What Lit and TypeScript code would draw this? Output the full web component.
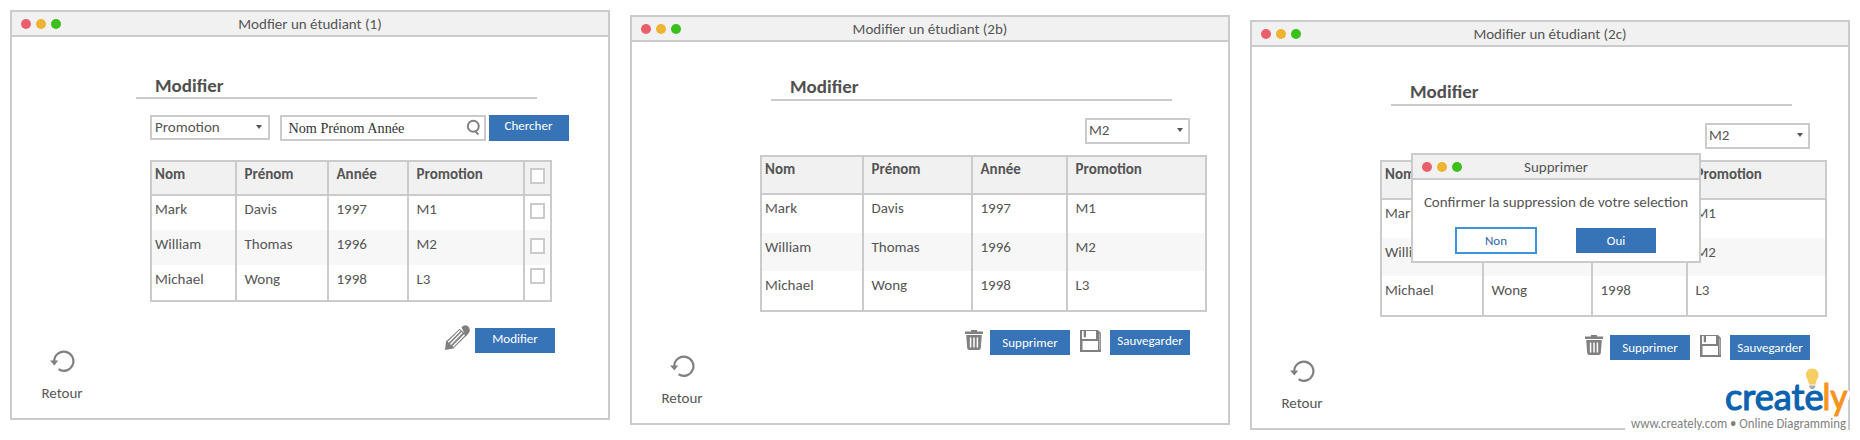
import { LitElement, html, css, nothing } from "lit";
import { customElement, property } from "lit/decorators.js";

const trash = html`<svg class="trash" width="18" height="20" viewBox="0 0 18 20">
  <path fill="#808080" d="M6 0h6v1.400h6v2.600H0V1.400h6z"/>
  <path fill="#808080" d="M1.200 5h15.600L15.800 18q-.2 2-2.200 2H4.400q-2 0-2.200-2z"/>
  <path stroke="#fff" stroke-width="1.500" d="M5.600 7.500v10M9 7.500v10M12.400 7.500v10"/>
</svg>`;

const floppy = html`<svg class="floppy" width="21" height="22" viewBox="0 0 21 22">
  <path fill="#808080" d="M0 0h18l3 3v19H0z"/>
  <path fill="#fff" d="M2 1h1.700v6.300H6V1h10v8H2zM2.500 11h15.500v9H2.500z"/>
  <path fill="#d0d0d0" d="M19.400 3.500h.9v16h-.9z"/>
</svg>`;

const pencil = html`<svg class="pencil" width="25" height="25" viewBox="0 0 25 25">
  <path fill="#808080" d="M16.500 2.200Q19.500-1.200 23 1.200q3.200 3 .8 6.800l-3 3.600z"/>
  <path fill="#808080" d="M14.600 3.800l7.200 6.400L8.300 23.400 0 25l1-8.600z"/>
  <path stroke="#fff" stroke-width="1.400" d="M15 5.400L3.300 17.200M17 7.600L5.500 19.400M19.500 9.800L7.900 21.500"/>
</svg>`;

const back = html`<svg class="back" width="25" height="22" viewBox="0 0 25 22">
  <path fill="none" stroke="#808080" stroke-width="2.200" d="M4.200 13V10.800A9.600 9.600 0 1 1 8.600 19.300"/>
  <path fill="#808080" d="M0 10.600h8.200L4.400 15.400z"/>
</svg>`;

const base = css`
  :host { display: block; box-sizing: border-box; }
  * { box-sizing: border-box; }
  svg { display: block; flex: none; }
`;

@customElement("frame-window")
class FrameWindow extends LitElement {
  @property() heading = "";
  static styles = [base, css`
    :host { border: 2px solid #cbcbcb; background: #fff; }
    .bar { height: 25px; background: #f1f1f1; border-bottom: 2px solid #cbcbcb; display: grid;
      grid-template-columns: 60px 1fr 60px; align-items: center; }
    .dots { display: flex; gap: 5px; padding-left: 9px; }
    .dot { width: 10px; height: 10px; flex: none; border-radius: 50%; }
    .red { background: #ea5f6c; } .amber { background: #edb431; } .green { background: #3bc01b; }
    .title { text-align: center; line-height: 24px; height: 23px; white-space: nowrap; }
  `];
  render() {
    return html`<div class="bar">
      <div class="dots"><i class="dot red"></i><i class="dot amber"></i><i class="dot green"></i></div>
      <div class="title">${this.heading}</div>
    </div><slot></slot>`;
  }
}

@customElement("student-table")
class StudentTable extends LitElement {
  @property({ type: Boolean, reflect: true }) selectable = false;
  static styles = [base, css`
    :host { border: 2px solid #cbcbcb; }
    .row { display: grid; grid-template-columns: 100px 109px 95px 1fr; height: 38px; }
    .cell { border-left: 2px solid #cbcbcb; padding: 4px 0 0 7.500px; line-height: 20px; }
    .cell:first-child { border-left: 0; padding-left: 3px; }
    .head { font-weight: 700; background: #f1f1f1; border-bottom: 2px solid #cbcbcb; }
    .head .cell { padding-top: 2px; }
    .first .cell { padding-top: 3px; }
    .alt { background: #f7f7f7; }
    .last { height: 39px; }
    :host([selectable]) .row { grid-template-columns: 83px 92px 80px 116px 1fr; height: 35px; }
    :host([selectable]) .head, :host([selectable]) .first { height: 34px; }
    .row .pick { padding: 8px 0 0 5px; }
    .head .pick { padding-top: 6px; }
    .first .pick { padding-top: 7px; }
    .last .pick { padding-top: 3px; }
    .box { display: block; width: 15px; height: 16px; border: 2px solid #cbcbcb; background: #fff; }
  `];
  render() {
    const rows = [
      ["head", "Nom", "Prénom", "Année", "Promotion"],
      ["first", "Mark", "Davis", "1997", "M1"],
      ["alt", "William", "Thomas", "1996", "M2"],
      ["last", "Michael", "Wong", "1998", "L3"],
    ];
    return rows.map(([kind, ...cells]) => html`<div class="row ${kind}">
      ${cells.map((c) => html`<div class="cell">${c}</div>`)}
      ${this.selectable ? html`<div class="cell pick"><i class="box"></i></div>` : nothing}
    </div>`);
  }
}

@customElement("app-root")
class AppRoot extends LitElement {
  static styles = [base, css`
    :host { width: 1860px; height: 440px; background: #fff; overflow: hidden; position: relative;
      font: 15px Carlito, Lato, sans-serif; color: #555; }
    .canvas { display: flex; gap: 20px; padding: 10px; }
    .win { width: 600px; height: 410px; flex: none; }
    .w2 { margin-top: 5px; }
    .w3 { margin-top: 10px; position: relative; }
    .heading { margin: 38px 0 0 124px; width: 401px; height: 24px; border-bottom: 2px solid #cbcbcb;
      padding-left: 19px; font-size: 19px; font-weight: 700; line-height: 21px; color: #505050; }
    .edit .heading { margin: 35px 0 0 139px; line-height: 20px; }
    .search { display: flex; margin: 16px 0 0 138px; height: 26px; align-items: flex-start; }
    .select { display: flex; justify-content: space-between; align-items: center; width: 120px; height: 25px;
      border: 2px solid #cbcbcb; padding: 0 6px 1px 3px; line-height: 20px; }
    .edit .select { width: 105px; height: 26px; margin: 17px 0 0 453px; padding: 0 5px 2px 2px; }
    .arrow { width: 0; height: 0; border: 3px solid transparent; border-top: 4.500px solid #555; border-bottom: 0; }
    .input { width: 206px; height: 26px; margin-left: 10px; border: 2px solid #cbcbcb; display: flex;
      justify-content: space-between; padding: 1px 4px 0 6.500px; font: 14.200px/20px "Liberation Serif", serif;
      color: #333; }
    .btn { flex: none; width: 80px; height: 25px; background: #3673b7; color: #fff; font-size: 13px;
      line-height: 21px; text-align: center; }
    .low { line-height: 25px; }
    .search .btn { margin-left: 2.500px; height: 26px; }
    .list { width: 402px; height: 142px; margin: 19px 0 0 138px; }
    .edit .list { width: 447px; height: 157px; margin: 11px 0 0 128px; }
    .actions { display: flex; }
    .find .actions { margin: 23px 0 0 433px; }
    .find .actions .btn { margin: 3px 0 0 5px; }
    .edit .actions { margin: 18px 0 0 333px; }
    .edit .actions .btn { margin-left: 7px; }
    .edit .actions .floppy { margin-left: 10px; }
    .edit .actions .floppy + .btn { margin-left: 9px; }
    .return { width: 64px; margin-left: 18px; display: flex; flex-direction: column; align-items: center; }
    .find .return { margin-top: -3px; }
    .return .label { margin-top: 11px; line-height: 20px; }
    .dialog { position: absolute; left: 159px; top: 131px; width: 290px; height: 110px; }
    .ask { margin-top: 12px; text-align: center; line-height: 20px; white-space: nowrap; }
    .answers { display: flex; margin: 15px 0 0 42px; gap: 39px; }
    .no { width: 82px; height: 27px; border: 2px solid #3c94db; background: #fff; color: #2d679f; line-height: 23px; }
    .yes { margin-top: 1px; line-height: 25px; }
    .brand { position: absolute; left: 1624px; top: 362px; }
  `];
  back() {
    return html`<div class="return">${back}<span class="label">Retour</span></div>`;
  }
  edit(low: boolean) {
    return html`<div class="heading">Modifier</div>
      <div class="select">M2<i class="arrow"></i></div>
      <student-table class="list"></student-table>
      <div class="actions">${trash}<div class="btn low">Supprimer</div>${floppy}<div class="btn ${low ? "low" : ""}">Sauvegarder</div></div>
      ${this.back()}`;
  }
  render() {
    return html`<div class="canvas">
      <frame-window class="win find" heading="Modfier un étudiant (1)">
        <div class="heading">Modifier</div>
        <div class="search">
          <div class="select">Promotion<i class="arrow"></i></div>
          <div class="input">Nom Prénom Année
            <svg width="14" height="18" viewBox="0 0 14 18"><circle cx="7.300" cy="8.300" r="5.500" fill="none" stroke="#808080" stroke-width="1.900"/><path d="M9 12.500l3.200 4.200" stroke="#808080" stroke-width="2"/></svg>
          </div>
          <div class="btn">Chercher</div>
        </div>
        <student-table class="list" selectable></student-table>
        <div class="actions">${pencil}<div class="btn">Modifier</div></div>
        ${this.back()}
      </frame-window>
      <frame-window class="win edit w2" heading="Modifier un étudiant (2b)">${this.edit(false)}</frame-window>
      <frame-window class="win edit w3" heading="Modifier un étudiant (2c)">
        ${this.edit(true)}
        <frame-window class="dialog" heading="Supprimer">
          <div class="ask">Confirmer la suppression de votre selection</div>
          <div class="answers"><div class="btn no">Non</div><div class="btn yes">Oui</div></div>
        </frame-window>
      </frame-window>
    </div>
    <svg class="brand" width="230" height="72" viewBox="1624 362 230 72" font-family="Lato, Carlito, sans-serif">
      <path fill="#fff" d="M1625 421h223v11h-223zM1840 391q10-3 10 2 0 8-6 12h-4z"/>
      <g font-size="37" stroke-width="1.200" stroke-linejoin="round">
        <text x="1725" y="409.500" textLength="98.500" lengthAdjust="spacingAndGlyphs" fill="#0a62b0" stroke="#0a62b0">create</text>
        <text x="1822.500" y="409.500" textLength="25" lengthAdjust="spacingAndGlyphs" fill="#f7931e" stroke="#f7931e">ly</text>
      </g>
      <path fill="#f5cf63" d="M1812.300 368.500c3.700 0 6.300 2.800 6.300 6.200 0 3.500-2.300 4.600-3 9.800h-6.600c-.7-5.200-3-6.300-3-9.800 0-3.400 2.600-6.200 6.300-6.200z"/>
      <path fill="#aaa" d="M1809.300 385.500h6v1.500l-1.500 2h-3l-1.500-2z"/>
      <text x="1631" y="428.300" font-size="13.500" font-family="Carlito, Lato, sans-serif" textLength="215" lengthAdjust="spacingAndGlyphs" fill="#808080">www.creately.com • Online Diagramming</text>
    </svg>`;
  }
}
